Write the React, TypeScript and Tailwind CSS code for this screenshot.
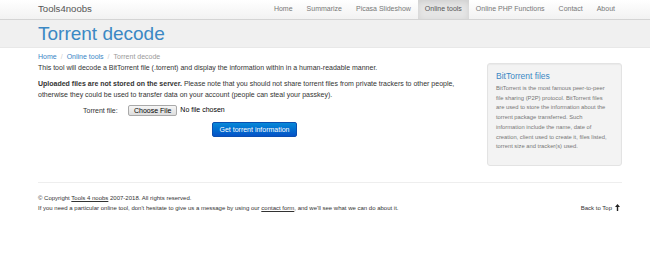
// Torrent decode page (Tools4noobs)
// Navbar, title band, upload form with info sidebar, footer

const navItems = ['Home', 'Summarize', 'Picasa Slideshow', 'Online tools', 'Online PHP Functions', 'Contact', 'About'];

function ArrowUpIcon() {
  return (
    <svg width="5" height="7" viewBox="0 0 10 14" className="inline-block">
      <path d="M5 0 L10 6 L6.4 6 L6.4 14 L3.6 14 L3.6 6 L0 6 Z" fill="#222" />
    </svg>
  );
}

export default function App() {
  return (
    <div className="min-h-[266px] bg-white text-[#333] font-['Liberation_Sans',Arial,sans-serif]">
      {/* navbar */}
      <div className="h-[20px] bg-gradient-to-b from-white to-[#f2f2f2] border-b border-[#d4d4d4] shadow-[0_1px_3px_rgba(0,0,0,0.06)]">
        <div className="ml-[38px] w-[584px] h-full flex items-center justify-between">
          <span className="text-[9.6px] text-[#555]">Tools4noobs</span>
          <ul className="flex h-full">
            {navItems.map((item) => (
              <li
                key={item}
                className={`flex items-center px-[7px] text-[7px] ${
                  item === 'Online tools'
                    ? 'bg-[#e5e5e5] text-[#555] shadow-[inset_0_2px_6px_rgba(0,0,0,0.1)]'
                    : 'text-[#777]'
                }`}
              >
                {item}
              </li>
            ))}
          </ul>
        </div>
      </div>

      {/* title band */}
      <div className="h-[28px] bg-[#f0f0f0] border-b border-[#e8e8e8]">
        <div className="ml-[38px] w-[584px] h-full flex items-center">
          <h1 className="text-[19px] leading-none text-[#3b88c4]">Torrent decode</h1>
        </div>
      </div>

      {/* content */}
      <div className="ml-[38px] w-[584px] flex gap-[16px]">
        <div className="flex-1 pt-[3px] text-[7px] leading-[11px]">
          <div className="flex">
            <a className="text-[#3a86c6]">Home</a>
            <span className="px-[4px] text-[#ccc]">/</span>
            <a className="text-[#3a86c6]">Online tools</a>
            <span className="px-[4px] text-[#ccc]">/</span>
            <span className="text-[#999]">Torrent decode</span>
          </div>
          <p>This tool will decode a BitTorrent file (.torrent) and display the information within in a human-readable manner.</p>
          <p className="mt-[5px]">
            <b>Uploaded files are not stored on the server.</b> Please note that you should not share torrent files from
            private trackers to other people, otherwise they could be used to transfer data on your account (people can
            steal your passkey).
          </p>
          <div className="mt-[5px] flex items-center h-[11px] pl-[45px]">
            <span className="w-[45px]">Torrent file:</span>
            <span className="h-[11px] px-[5px] flex items-center border border-[#a9a9a9] rounded-[2px] bg-gradient-to-b from-[#f6f6f6] to-[#dddddd] text-black">
              Choose File
            </span>
            <span className="ml-[3px] -mt-[3px] text-black">No file chosen</span>
          </div>
          <div className="mt-[6px] flex justify-center">
            <button className="h-[15px] px-[6px] rounded-[2px] border border-[#0a4fb0] bg-gradient-to-b from-[#0a88d8] to-[#0752c6] text-white text-[7px]">
              Get torrent information
            </button>
          </div>
        </div>

        <div className="w-[135px] mt-[15px] pt-[7px] pb-[13px] pl-[8px] pr-[12px] bg-[#f3f3f3] border border-[#e3e3e3] rounded-[3px] shadow-[inset_0_1px_1px_rgba(0,0,0,0.04)]">
          <h3 className="text-[8.5px] leading-[11px] text-[#3b88c4] mb-[2px]">BitTorrent files</h3>
          <p className="text-[5.8px] leading-[9.7px] text-[#777]">
            BitTorrent is the most famous peer-to-peer file sharing (P2P) protocol. BitTorrent files are used to store the
            information about the torrent package transferred. Such information include the name, date of creation, client
            used to create it, files listed, torrent size and tracker(s) used.
          </p>
        </div>
      </div>

      {/* footer */}
      <div className="ml-[38px] w-[584px] mt-[16px] pt-[10px] border-t border-[#eee] text-[6px] leading-[10px] text-[#333]">
        <p>
          © Copyright <a className="underline">Tools 4 noobs</a> 2007-2018. All rights reserved.
        </p>
        <div className="flex justify-between">
          <p>
            If you need a particular online tool, don't hesitate to give us a message by using our{' '}
            <a className="underline">contact form</a>, and we'll see what we can do about it.
          </p>
          <span className="flex items-center gap-[3px] pr-[2px]">
            Back to Top <ArrowUpIcon />
          </span>
        </div>
      </div>
    </div>
  );
}
